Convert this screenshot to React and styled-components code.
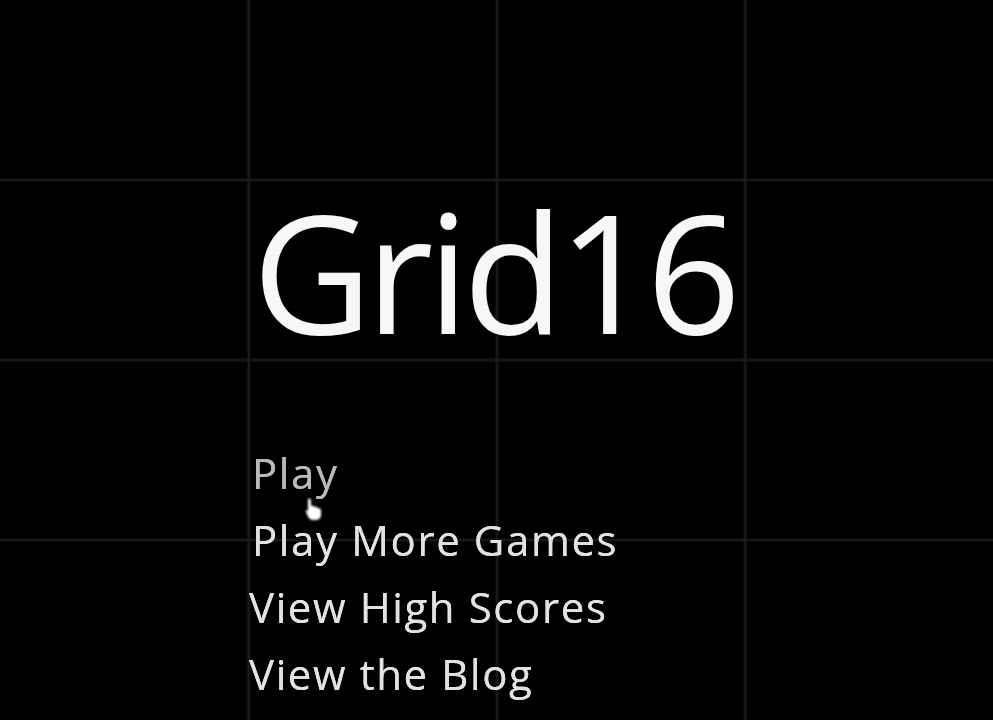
import React from 'react'
import styled, { createGlobalStyle } from 'styled-components'

const GlobalStyle = createGlobalStyle`
  html, body {
    margin: 0;
    padding: 0;
    background: #000;
  }
  body {
    font-family: "Open Sans", "Noto Sans", sans-serif;
  }
`

const line = '#1d1d1d'

const Screen = styled.div`
  position: relative;
  width: 100vw;
  height: 100vh;
  overflow: hidden;
  background-color: #000;
  background-image:
    linear-gradient(90deg,
      transparent calc(25% - 2px), ${line} calc(25% + 0.5px), transparent calc(25% + 3px),
      transparent calc(50% - 2px), ${line} calc(50% + 0.5px), transparent calc(50% + 3px),
      transparent calc(75% - 2px), ${line} calc(75% + 0.5px), transparent calc(75% + 3px)),
    linear-gradient(180deg,
      transparent calc(25% - 2.5px), ${line} 25%, transparent calc(25% + 2.5px),
      transparent calc(50% - 2.5px), ${line} 50%, transparent calc(50% + 2.5px),
      transparent calc(75% - 2.5px), ${line} 75%, transparent calc(75% + 2.5px));
  display: flex;
  flex-direction: column;
`

const Title = styled.h1`
  margin: 188px 0 0;
  padding-right: 6px;
  text-align: center;
  font-size: 165px;
  line-height: 1;
  font-weight: 400;
  letter-spacing: -6px;
  color: #f7f7f7;
  filter: blur(0.6px);
`

const Menu = styled.ul`
  list-style: none;
  margin: 86px 0 0;
  padding: 0 0 0 249px;
  display: flex;
  flex-direction: column;
`

const MenuItem = styled.li`
  font-size: 42px;
  line-height: 67px;
  height: 67px;
  font-weight: 500;
  letter-spacing: 1.6px;
  color: ${p => (p.$hover ? '#b9b9b9' : '#e2e2e2')};
  padding-left: ${p => p.$indent || 0}px;
  text-shadow: 0 0 0.6px currentColor;
  filter: blur(0.7px);
  white-space: nowrap;
`

const Pointer = styled.svg`
  position: absolute;
  left: 303px;
  top: 497px;
  width: 22px;
  height: 24px;
  filter: blur(1px);
`

const items = [
  { label: 'Play', hover: true, indent: 3 },
  { label: 'Play More Games', indent: 3 },
  { label: 'View High Scores' },
  { label: 'View the Blog' },
]

export default function App() {
  return (
    <>
      <GlobalStyle />
      <Screen>
        <Title>Grid16</Title>
        <Menu>
          {items.map(it => (
            <MenuItem key={it.label} $hover={it.hover} $indent={it.indent}>
              {it.label}
            </MenuItem>
          ))}
        </Menu>
        <Pointer viewBox="0 0 22 24">
          <path d="M5 2 C6.5 1 8 2 8 3.5 L8 9 C9.5 8.5 11 9 11.5 10 C13 9.5 14.5 10 15 11.5 C16.5 11 18 12 18 13.5 L18 18 C18 21 15.5 23 12.5 23 L10 23 C7.5 23 6 21.5 5 19.5 L3 15 C2.5 13.8 3.5 13 4.5 13.5 L5 14 Z" fill="#fff" />
        </Pointer>
      </Screen>
    </>
  )
}
